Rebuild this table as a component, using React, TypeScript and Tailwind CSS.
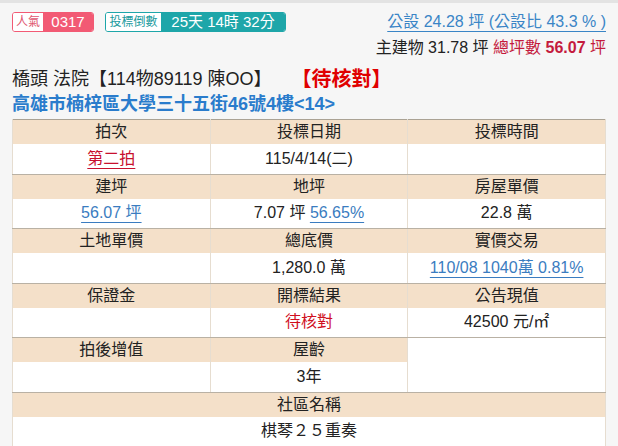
import React from 'react';

const font = { fontFamily: '"Liberation Sans", "Noto Sans CJK TC", sans-serif' };

const th = 'h-[24px] bg-[#f4e0c9] text-center font-normal text-[16px] text-[#222] border-l border-r border-[#e6ddd0] p-0';
const td = 'h-[30px] bg-white text-center text-[16px] text-[#222] border-l border-r border-b border-[#e6ddd0] border-b-[#b9b1a4] p-0';
const link = 'text-[#3a7cc0] underline underline-offset-[4px] decoration-[#3a7cc0]';

export default function App() {
  return (
    <div className="w-[618px] h-[446px] bg-[#f6f6f6] overflow-hidden" style={font}>
      <div className="h-[3px] bg-[#e3e3e3]" />

      <div className="px-3">
        <div className="flex justify-between items-start pt-[8px]">
          <div className="flex items-center gap-[11px] mt-[1px]">
            <div className="flex h-[20px] rounded-[3px] overflow-hidden border border-[#f25a74]">
              <span className="w-[30px] bg-white text-[#e0566f] text-[12px] leading-[18px] text-center">人氣</span>
              <span className="w-[50px] bg-[#f25a74] text-white text-[15px] leading-[18px] text-center">0317</span>
            </div>
            <div className="flex h-[20px] rounded-[3px] overflow-hidden border border-[#1ea6a9]">
              <span className="w-[55px] bg-white text-[#1a9a9d] text-[12px] leading-[18px] text-center">投標倒數</span>
              <span className="w-[124px] bg-[#1ea6a9] text-white text-[15px] leading-[18px] text-center">25天 14時 32分</span>
            </div>
          </div>

          <div className="text-right text-[16px]">
            <div className="leading-[22px]">
              <span className="text-[#3a85c6] underline underline-offset-[4px] decoration-[#3a85c6]">公設 24.28 坪 (公設比 43.3 % )</span>
            </div>
            <div className="leading-[22px] mt-[4px] text-[#222]">
              主建物 31.78 坪 <span className="text-[#c41a3d]">總坪數 <b>56.07</b> 坪</span>
            </div>
          </div>
        </div>

        <div className="mt-[9px] leading-[22px] text-[18px] text-[#222] flex items-center">
          <span>橋頭 法院【114物89119 陳OO】</span>
          <span className="ml-[20px] text-[20px] text-[#e00000] font-bold">【待核對】</span>
        </div>

        <div className="mt-[3px] leading-[22px] text-[18px] font-bold text-[#2a7ccc]">
          高雄市楠梓區大學三十五街46號4樓&lt;14&gt;
        </div>

        <table className="mt-[4px] w-full border-collapse table-fixed border border-[#aaa294]">
          <tbody>
            <tr className="border-t border-[#aaa294]">
              <th className={th}>拍次</th>
              <th className={th}>投標日期</th>
              <th className={th}>投標時間</th>
            </tr>
            <tr>
              <td className={td}>
                <span className="text-[#c8102e] underline underline-offset-[4px] decoration-[#c8102e]">第二拍</span>
              </td>
              <td className={td}>115/4/14(二)</td>
              <td className={td}></td>
            </tr>
            <tr>
              <th className={th}>建坪</th>
              <th className={th}>地坪</th>
              <th className={th}>房屋單價</th>
            </tr>
            <tr>
              <td className={td}>
                <span className={link}>56.07 坪</span>
              </td>
              <td className={td}>
                7.07 坪 <span className={link}>56.65%</span>
              </td>
              <td className={td}>22.8 萬</td>
            </tr>
            <tr>
              <th className={th}>土地單價</th>
              <th className={th}>總底價</th>
              <th className={th}>實價交易</th>
            </tr>
            <tr>
              <td className={td}></td>
              <td className={td}>1,280.0 萬</td>
              <td className={td}>
                <span className={link}>110/08 1040萬 0.81%</span>
              </td>
            </tr>
            <tr>
              <th className={th}>保證金</th>
              <th className={th}>開標結果</th>
              <th className={th}>公告現值</th>
            </tr>
            <tr>
              <td className={td}></td>
              <td className={td}>
                <span className="text-[#d0101e]">待核對</span>
              </td>
              <td className={td}>42500 元/㎡</td>
            </tr>
            <tr>
              <th className={th}>拍後增值</th>
              <th className={th}>屋齡</th>
              <td rowSpan={2} className={td}></td>
            </tr>
            <tr>
              <td className={td}></td>
              <td className={td}>3年</td>
            </tr>
            <tr>
              <th colSpan={3} className={th}>社區名稱</th>
            </tr>
            <tr>
              <td colSpan={3} className={td}>棋琴２５重奏</td>
            </tr>
          </tbody>
        </table>
      </div>
    </div>
  );
}
